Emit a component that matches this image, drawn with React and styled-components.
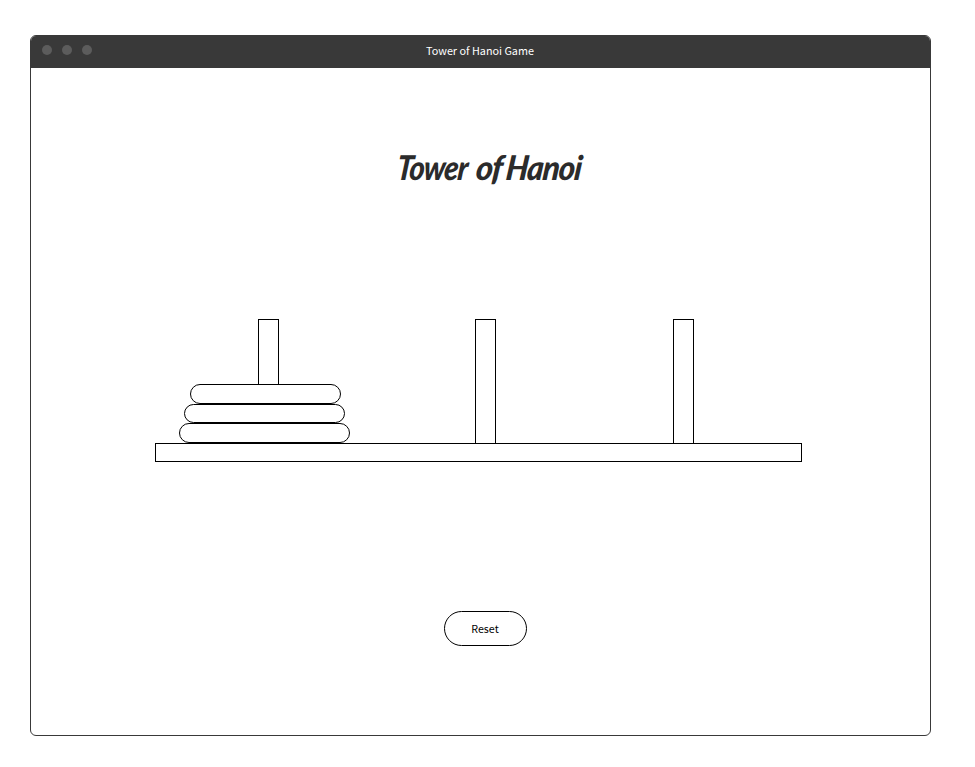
import React from "react";
import styled, { createGlobalStyle } from "styled-components";

const GlobalStyle = createGlobalStyle`
  *, *::before, *::after { box-sizing: border-box; }
  body { margin: 0; background: #fff; }
`;

const sans = `"Noto Sans CJK SC", "Noto Sans", sans-serif`;

const Page = styled.div`
  padding: 35px 0 0 30px;
  font-family: ${sans};
`;

const Window = styled.main`
  display: flex;
  flex-direction: column;
  width: 901px;
  height: 701px;
  border: 1px solid #393939;
  border-radius: 6px;
  overflow: hidden;
  background: #fff;
`;

const TitleBar = styled.header`
  display: grid;
  grid-template-columns: 1fr auto 1fr;
  align-items: center;
  height: 32px;
  flex: none;
  padding: 0 11px 0 10px;
  background: #393939;
`;

const Lights = styled.div`
  display: flex;
  gap: 10px;
  margin: -4px 0 0 1px;
`;

const Light = styled.span`
  width: 10px;
  height: 10px;
  border-radius: 50%;
  background: #5c5c5c;
`;

const WindowTitle = styled.span`
  font-size: 10.8px;
  line-height: 20px;
  color: #fff;
  white-space: nowrap;
  margin-top: -4px;
`;

const Content = styled.section`
  display: flex;
  flex-direction: column;
  align-items: flex-start;
`;

const Heading = styled.h1`
  display: flex;
  gap: 9px;
  height: 44px;
  margin: 77px 0 1px 364px;
  font: italic 900 34px/44px Lato, sans-serif;
  color: #2b2b2b;
  white-space: nowrap;
`;

const Word = styled.span`
  width: ${(p) => p.$width}px;
  letter-spacing: -1px;
  transform: scaleX(${(p) => p.$stretch}) skewX(-7deg);
  transform-origin: left bottom;
`;

const Board = styled.div`
  width: 647px;
  margin: 129px 0 0 124px;
`;

const Towers = styled.div`
  display: grid;
  grid-template-columns: 320px 198px 129px;
  height: 124px;
`;

const Tower = styled.div`
  display: flex;
  flex-direction: column;
  align-items: flex-start;
`;

const Peg = styled.div`
  flex: 1;
  width: 21px;
  margin-left: ${(p) => p.$offset}px;
  border: 1px solid #000;
  border-bottom: 0;
`;

const Disk = styled.div`
  width: ${(p) => p.$width}px;
  height: ${(p) => p.$height}px;
  margin-left: ${(p) => p.$offset}px;
  border: 1px solid #000;
  border-radius: 10px;
`;

const Base = styled.div`
  height: 19px;
  border: 1px solid #000;
`;

const ResetButton = styled.button`
  width: 83px;
  height: 35px;
  margin: 149px 0 0 413px;
  padding: 0 1px 0 0;
  border: 1px solid #000;
  border-radius: 18px;
  background: #fff;
  color: #000;
  font: 10.7px/18px ${sans};
`;

const towers = [
  {
    offset: 103,
    disks: [
      { width: 151, height: 20, offset: 35 },
      { width: 161, height: 19, offset: 29 },
      { width: 171, height: 20, offset: 24 },
    ],
  },
  { offset: 0, disks: [] },
  { offset: 0, disks: [] },
];

export default function App() {
  return (
    <Page>
      <GlobalStyle />
      <Window>
        <TitleBar>
          <Lights>
            <Light />
            <Light />
            <Light />
          </Lights>
          <WindowTitle>Tower of Hanoi Game</WindowTitle>
        </TitleBar>
        <Content>
          <Heading>
            <Word $width={70} $stretch={0.86}>Tower</Word>
            <Word $width={21} $stretch={0.96}>of</Word>
            <Word $width={77} $stretch={0.92}>Hanoi</Word>
          </Heading>
          <Board>
            <Towers>
              {towers.map((tower, i) => (
                <Tower key={i}>
                  <Peg $offset={tower.offset} />
                  {tower.disks.map((disk) => (
                    <Disk
                      key={disk.width}
                      $width={disk.width}
                      $height={disk.height}
                      $offset={disk.offset}
                    />
                  ))}
                </Tower>
              ))}
            </Towers>
            <Base />
          </Board>
          <ResetButton type="button">Reset</ResetButton>
        </Content>
      </Window>
    </Page>
  );
}
